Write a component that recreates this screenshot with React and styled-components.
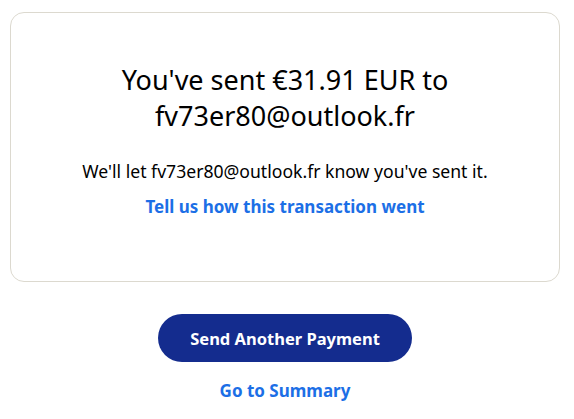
import React from "react";
import styled, { createGlobalStyle } from "styled-components";

const GlobalStyle = createGlobalStyle`
  body {
    margin: 0;
    background: #ffffff;
    font-family: "Noto Sans", "Open Sans", sans-serif;
    color: #000000;
  }
`;

const Page = styled.div`
  width: 550px;
  padding: 12px 0 0 10px;
`;

const Card = styled.div`
  box-sizing: border-box;
  height: 270px;
  border: 1px solid #dcd9cf;
  border-radius: 14px;
  padding: 49px 30px 0;
  display: flex;
  flex-direction: column;
  align-items: center;
  text-align: center;
`;

const Heading = styled.h1`
  margin: 0;
  font-size: 27px;
  line-height: 36px;
  font-weight: 400;
`;

const Message = styled.p`
  margin: 26px 0 0;
  font-size: 17.6px;
  line-height: 22px;
`;

const TextLink = styled.a`
  display: block;
  margin-top: ${(p) => p.$top || 0}px;
  font-size: 17px;
  line-height: 22px;
  font-weight: 700;
  color: #1c6fe6;
  text-decoration: none;
`;

const Actions = styled.div`
  display: flex;
  flex-direction: column;
  align-items: center;
  padding-top: 32px;
`;

const PrimaryButton = styled.button`
  width: 254px;
  height: 48px;
  border: none;
  border-radius: 24px;
  background: #142c8e;
  color: #ffffff;
  font-family: inherit;
  font-size: 16.5px;
  font-weight: 700;
`;

export default function App() {
  return (
    <>
      <GlobalStyle />
      <Page>
        <Card>
          <Heading>
            You've sent €31.91 EUR to
            <br />
            fv73er80@outlook.fr
          </Heading>
          <Message>We'll let fv73er80@outlook.fr know you've sent it.</Message>
          <TextLink href="#" $top={14}>Tell us how this transaction went</TextLink>
        </Card>
        <Actions>
          <PrimaryButton>Send Another Payment</PrimaryButton>
          <TextLink href="#" $top={18}>Go to Summary</TextLink>
        </Actions>
      </Page>
    </>
  );
}
